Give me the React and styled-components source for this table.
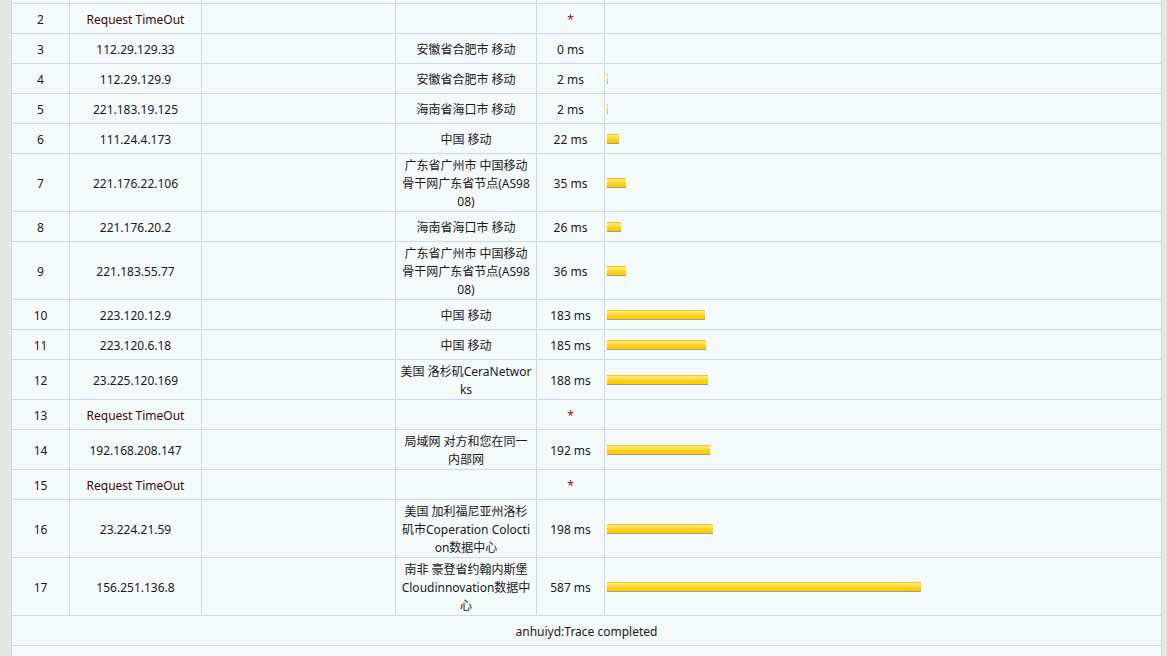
import React from 'react';
import styled, { createGlobalStyle } from 'styled-components';

const hops = [
  { n: 1, ip: '', loc: [], ms: null, hidden: true },
  { n: 2, ip: 'Request TimeOut', loc: [], ms: null },
  { n: 3, ip: '112.29.129.33', loc: ['安徽省合肥市 移动'], ms: 0 },
  { n: 4, ip: '112.29.129.9', loc: ['安徽省合肥市 移动'], ms: 2 },
  { n: 5, ip: '221.183.19.125', loc: ['海南省海口市 移动'], ms: 2 },
  { n: 6, ip: '111.24.4.173', loc: ['中国 移动'], ms: 22 },
  { n: 7, ip: '221.176.22.106', loc: ['广东省广州市 中国移动', '骨干网广东省节点(AS98', '08)'], ms: 35 },
  { n: 8, ip: '221.176.20.2', loc: ['海南省海口市 移动'], ms: 26 },
  { n: 9, ip: '221.183.55.77', loc: ['广东省广州市 中国移动', '骨干网广东省节点(AS98', '08)'], ms: 36 },
  { n: 10, ip: '223.120.12.9', loc: ['中国 移动'], ms: 183 },
  { n: 11, ip: '223.120.6.18', loc: ['中国 移动'], ms: 185 },
  { n: 12, ip: '23.225.120.169', loc: ['美国 洛杉矶CeraNetwor', 'ks'], ms: 188 },
  { n: 13, ip: 'Request TimeOut', loc: [], ms: null },
  { n: 14, ip: '192.168.208.147', loc: ['局域网 对方和您在同一', '内部网'], ms: 192 },
  { n: 15, ip: 'Request TimeOut', loc: [], ms: null },
  { n: 16, ip: '23.224.21.59', loc: ['美国 加利福尼亚州洛杉', '矶市Coperation Colocti', 'on数据中心'], ms: 198 },
  { n: 17, ip: '156.251.136.8', loc: ['南非 豪登省约翰内斯堡', 'Cloudinnovation数据中', '心'], ms: 587 },
];

const GlobalStyle = createGlobalStyle`
  html, body {
    margin: 0;
    padding: 0;
    background: #e4e8e2;
  }
  body {
    font-family: "Noto Sans", "Noto Sans CJK SC", sans-serif;
    font-size: 12px;
    color: #1a1a1a;
  }
`;

const Page = styled.div`
  height: 656px;
  overflow: hidden;
  padding-left: 11px;
`;

const Table = styled.table`
  width: 1151px;
  margin-top: -27px;
  border-collapse: collapse;
  table-layout: fixed;
  background: #f4f9fa;
`;

const Row = styled.tr`
  height: 30px;
`;

const Cell = styled.td`
  border: 1px solid #cfd8e8;
  padding: 3px 2px 0;
  line-height: 18px;
  text-align: center;
  vertical-align: middle;
  white-space: nowrap;
  color: ${({ $timeout }) => ($timeout ? '#3a0a0a' : '#1a1a1a')};
`;

const Star = styled.span`
  color: #8a1a1a;
`;

const BarCell = styled.td`
  border: 1px solid #cfd8e8;
  padding: 0 2px;
  vertical-align: middle;
`;

const Bar = styled.span`
  display: block;
  height: 10px;
  box-sizing: border-box;
  border-top: 1px solid #ffc600;
  border-bottom: 1px solid #9a9a9a;
  background: linear-gradient(#ffe47a 0%, #ffe066 30%, #ffd200 60%, #ffcc00 100%);
`;

const Footer = styled.td`
  border: 1px solid #cfd8e8;
  padding: 3px 2px 0;
  line-height: 18px;
  text-align: center;
  vertical-align: middle;
`;

const barWidth = (ms) => Math.round(ms * 0.535);

const HopRow = ({ hop }) => {
  const timeout = hop.ip === 'Request TimeOut';
  return (
    <Row>
      <Cell>{hop.hidden ? '' : hop.n}</Cell>
      <Cell $timeout={timeout}>{hop.ip}</Cell>
      <Cell />
      <Cell>
        {hop.loc.map((line, i) => (
          <React.Fragment key={i}>
            {i > 0 && <br />}
            {line}
          </React.Fragment>
        ))}
      </Cell>
      <Cell>{hop.ms === null ? (hop.hidden ? '' : <Star>*</Star>) : `${hop.ms} ms`}</Cell>
      <BarCell>
        {hop.ms > 0 && <Bar style={{ width: barWidth(hop.ms) }} />}
      </BarCell>
    </Row>
  );
};

const App = () => {
  return (
    <Page>
      <GlobalStyle />
      <Table>
        <colgroup>
          <col style={{ width: 58 }} />
          <col style={{ width: 132 }} />
          <col style={{ width: 194 }} />
          <col style={{ width: 141 }} />
          <col style={{ width: 68 }} />
          <col />
        </colgroup>
        <tbody>
          {hops.map((hop) => (
            <HopRow key={hop.n} hop={hop} />
          ))}
          <Row>
            <Footer colSpan={6}>anhuiyd:Trace completed</Footer>
          </Row>
          <Row>
            <Footer colSpan={6} />
          </Row>
        </tbody>
      </Table>
    </Page>
  );
};

export default App;
